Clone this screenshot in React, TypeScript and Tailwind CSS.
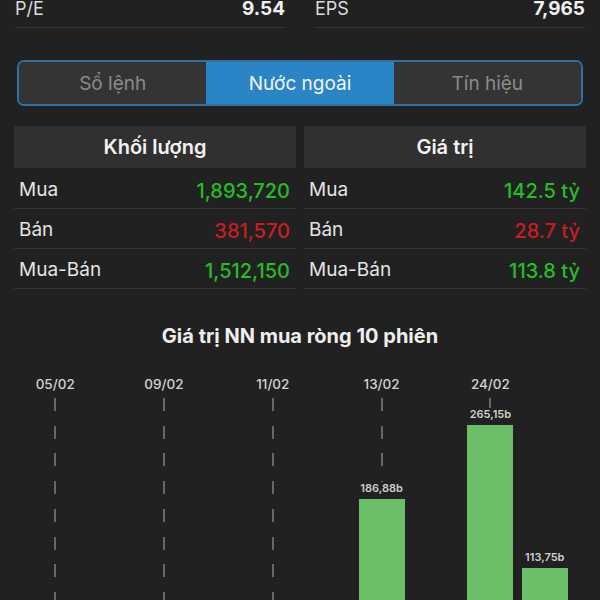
import React from "react";

const stats = [
  { label: "P/E", value: "9.54" },
  { label: "EPS", value: "7,965" },
];

const tabs = ["Sổ lệnh", "Nước ngoài", "Tín hiệu"];

const tables = [
  {
    title: "Khối lượng",
    rows: [
      { label: "Mua", value: "1,893,720", up: true },
      { label: "Bán", value: "381,570", up: false },
      { label: "Mua-Bán", value: "1,512,150", up: true },
    ],
  },
  {
    title: "Giá trị",
    rows: [
      { label: "Mua", value: "142.5 tỷ", up: true },
      { label: "Bán", value: "28.7 tỷ", up: false },
      { label: "Mua-Bán", value: "113.8 tỷ", up: true },
    ],
  },
];

// net foreign buy value per session, in billions
const sessions = [
  { date: "05/02", value: -12.4 },
  { date: "06/02", value: -8.1 },
  { date: "09/02", value: -21.6 },
  { date: "10/02", value: -5.3 },
  { date: "11/02", value: -30.2 },
  { date: "12/02", value: -14.7 },
  { date: "13/02", value: 186.88 },
  { date: "14/02", value: -9.9 },
  { date: "24/02", value: 265.15 },
  { date: "25/02", value: 113.75 },
];

const PX_PER_B = 0.9455;

function fmt(v: number) {
  return v.toFixed(2).replace(".", ",") + "b";
}

export default function App() {
  return (
    <div
      className="h-[600px] w-[600px] overflow-hidden bg-[#212121] text-[#e6e6e6]"
      style={{ fontFamily: "Inter, 'Noto Sans', sans-serif" }}
    >
      {/* P/E, EPS */}
      <div className="-mt-[3px] grid grid-cols-2 gap-[30px] px-[15px]">
        {stats.map((s) => (
          <div
            key={s.label}
            className="flex h-[31px] items-start justify-between border-b border-[#343434] leading-[24px]"
          >
            <span className="text-[18px] text-[#dcdcdc]">{s.label}</span>
            <span className="text-[19px] font-bold text-[#f0f0f0]">{s.value}</span>
          </div>
        ))}
      </div>

      {/* Segmented control */}
      <div className="mx-[17px] mt-[32px] flex h-[46px] overflow-hidden rounded-[7px] border-2 border-[#2f72a3] bg-[#1c1c1c]">
        {tabs.map((t, i) => (
          <div
            key={t}
            className={
              i === 1
                ? "flex flex-1 items-center justify-center bg-[#2a84c6] pt-[3px] text-[19px] text-[#f2f6fa]"
                : "flex flex-1 items-center justify-center bg-[#343434] pt-[3px] text-[19px] text-[#8b8b8b]"
            }
          >
            {t}
          </div>
        ))}
      </div>

      {/* Foreign trade tables */}
      <div className="mt-[20px] grid grid-cols-2 gap-[8px] px-[14px]">
        {tables.map((tb) => (
          <div key={tb.title}>
            <div className="flex h-[42px] items-center justify-center bg-[#303030] text-[20px] font-semibold text-[#f2f2f2]">
              {tb.title}
            </div>
            {tb.rows.map((r, i) => (
              <div
                key={r.label}
                className={
                  i === 0
                    ? "flex h-[41px] items-center justify-between border-b border-[#333333] pl-[5px] pr-[6px] pt-[5px]"
                    : "flex h-[40px] items-center justify-between border-b border-[#333333] pl-[5px] pr-[6px] pt-[4px]"
                }
              >
                <span className="text-[19px] text-[#e4e4e4]">{r.label}</span>
                <span
                  className={
                    r.up
                      ? "text-[20px] font-medium text-[#25bd25]"
                      : "text-[20px] font-medium text-[#c91d22]"
                  }
                >
                  {r.value}
                </span>
              </div>
            ))}
          </div>
        ))}
      </div>

      {/* Chart */}
      <h2 className="mt-[35px] text-center text-[20px] font-bold leading-[24px] text-[#eeeeee]">
        Giá trị NN mua ròng 10 phiên
      </h2>
      <div className="mt-[26px] grid grid-cols-10 px-[28px]">
        {sessions.map((s, i) => {
          const labeled = i % 2 === 0;
          const h = s.value > 0 ? s.value * PX_PER_B : 0;
          return (
            <div key={s.date} className="flex h-[302px] flex-col items-center">
              <div className="h-[20px] text-[13.5px] font-medium leading-[20px] text-[#d2d2d2]">
                {labeled ? s.date : ""}
              </div>
              <div className="relative flex w-full flex-1 flex-col items-center justify-end">
                {labeled && (
                  <div className="absolute bottom-0 left-1/2 top-[4px] w-[2px] -translate-x-1/2 bg-[repeating-linear-gradient(to_bottom,#686868_0px,#686868_13px,transparent_13px,transparent_27.7px)]" />
                )}
                {h > 0 && (
                  <>
                    <span className="relative mb-[5px] bg-[#212121] px-px text-[11px] font-semibold leading-[12px] text-[#cfcfcf]">
                      {fmt(s.value)}
                    </span>
                    <div className="relative w-[46px] bg-[#6cbf69]" style={{ height: h }} />
                  </>
                )}
              </div>
            </div>
          );
        })}
      </div>
    </div>
  );
}
